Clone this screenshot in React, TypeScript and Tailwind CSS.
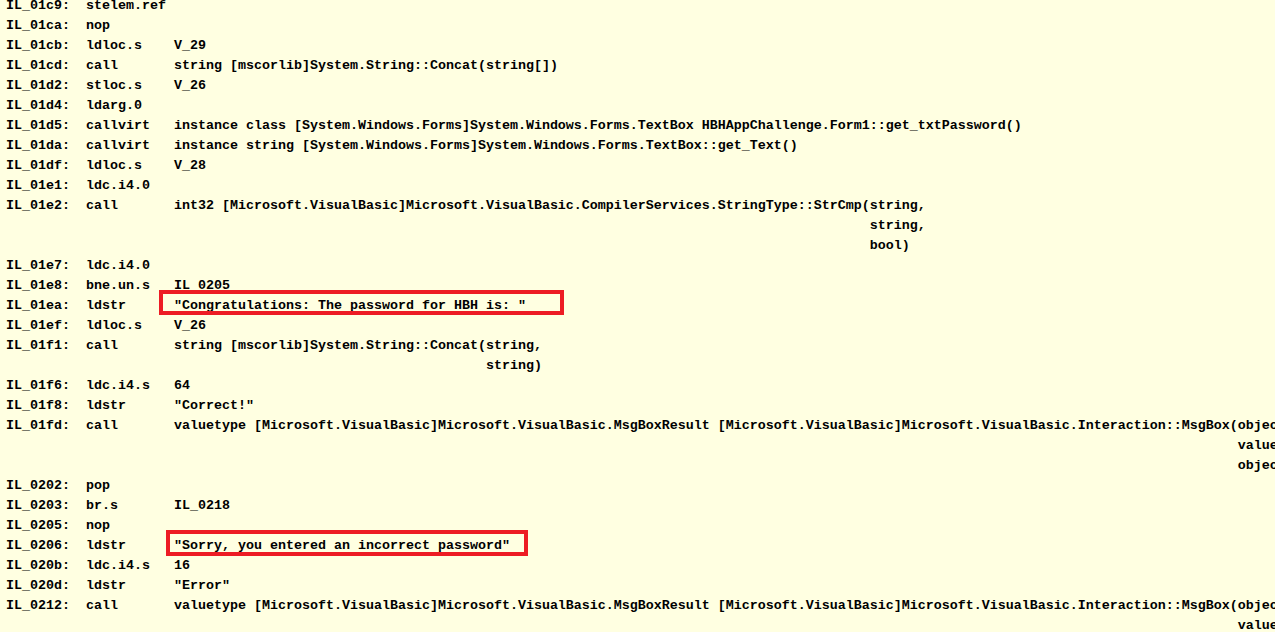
import React from "react";

type Line = [string, string, string] | string;

const lines: Line[] = [
  ["IL_01c9:", "stelem.ref", ""],
  ["IL_01ca:", "nop", ""],
  ["IL_01cb:", "ldloc.s", "V_29"],
  ["IL_01cd:", "call", "string [mscorlib]System.String::Concat(string[])"],
  ["IL_01d2:", "stloc.s", "V_26"],
  ["IL_01d4:", "ldarg.0", ""],
  ["IL_01d5:", "callvirt", "instance class [System.Windows.Forms]System.Windows.Forms.TextBox HBHAppChallenge.Form1::get_txtPassword()"],
  ["IL_01da:", "callvirt", "instance string [System.Windows.Forms]System.Windows.Forms.TextBox::get_Text()"],
  ["IL_01df:", "ldloc.s", "V_28"],
  ["IL_01e1:", "ldc.i4.0", ""],
  ["IL_01e2:", "call", "int32 [Microsoft.VisualBasic]Microsoft.VisualBasic.CompilerServices.StringType::StrCmp(string,"],
  " ".repeat(108) + "string,",
  " ".repeat(108) + "bool)",
  ["IL_01e7:", "ldc.i4.0", ""],
  ["IL_01e8:", "bne.un.s", "IL_0205"],
  ["IL_01ea:", "ldstr", "\"Congratulations: The password for HBH is: \""],
  ["IL_01ef:", "ldloc.s", "V_26"],
  ["IL_01f1:", "call", "string [mscorlib]System.String::Concat(string,"],
  " ".repeat(60) + "string)",
  ["IL_01f6:", "ldc.i4.s", "64"],
  ["IL_01f8:", "ldstr", "\"Correct!\""],
  ["IL_01fd:", "call", "valuetype [Microsoft.VisualBasic]Microsoft.VisualBasic.MsgBoxResult [Microsoft.VisualBasic]Microsoft.VisualBasic.Interaction::MsgBox(object,"],
  " ".repeat(154) + "valuetype [Microsoft.VisualBasic]Microsoft.VisualBasic.MsgBoxStyle,",
  " ".repeat(154) + "object)",
  ["IL_0202:", "pop", ""],
  ["IL_0203:", "br.s", "IL_0218"],
  ["IL_0205:", "nop", ""],
  ["IL_0206:", "ldstr", "\"Sorry, you entered an incorrect password\""],
  ["IL_020b:", "ldc.i4.s", "16"],
  ["IL_020d:", "ldstr", "\"Error\""],
  ["IL_0212:", "call", "valuetype [Microsoft.VisualBasic]Microsoft.VisualBasic.MsgBoxResult [Microsoft.VisualBasic]Microsoft.VisualBasic.Interaction::MsgBox(object,"],
  " ".repeat(154) + "valuetype [Microsoft.VisualBasic]Microsoft.VisualBasic.MsgBoxStyle,",
];

function fmt(l: Line): string {
  if (typeof l === "string") return l;
  const [a, o, r] = l;
  return (a + "  " + (r ? o.padEnd(11, " ") + r : o));
}

export default function App() {
  return (
    <div className="relative w-[1275px] h-[632px] overflow-hidden bg-[#ffffe1] text-black">
      <div
        className="mt-[-4px] pl-[6px] font-bold text-[13.333px] leading-[20px] whitespace-pre"
        style={{ fontFamily: '"Liberation Mono", "DejaVu Sans Mono", monospace' }}
      >
        {lines.map((l, i) => (
          <div key={i} className="h-[20px]">
            {fmt(l)}
          </div>
        ))}
      </div>
      <div className="absolute left-[159px] top-[290px] w-[405px] h-[25px] border-4 border-[#ed1c24]" />
      <div className="absolute left-[166px] top-[530px] w-[362px] h-[26px] border-4 border-[#ed1c24]" />
    </div>
  );
}
